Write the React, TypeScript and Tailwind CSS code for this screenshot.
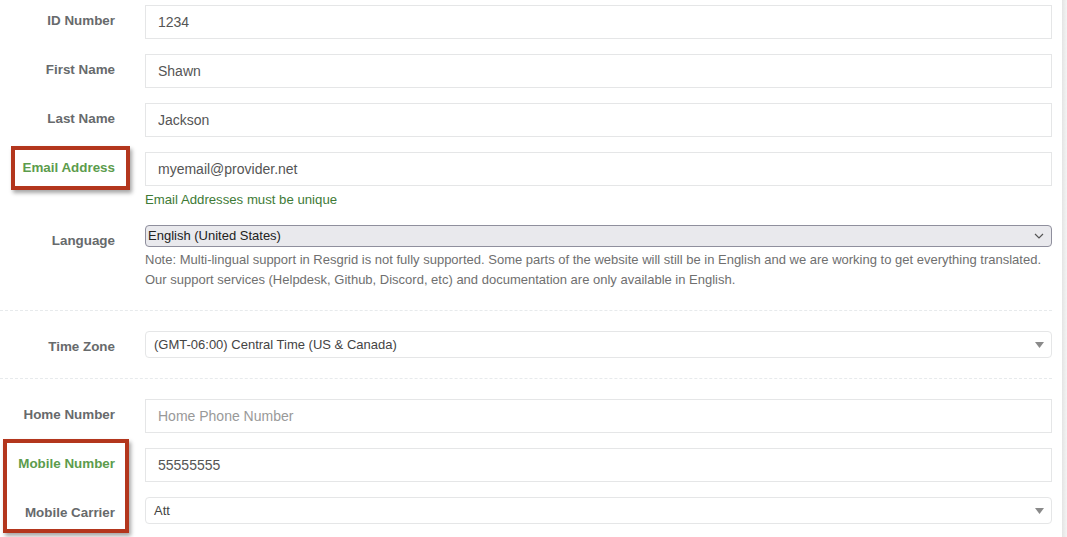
import React from 'react'

const font = { fontFamily: '"Liberation Sans", Arial, sans-serif' }

function Label({ text, green }: { text: string; green?: boolean }) {
  return (
    <div
      className={`w-[115px] shrink-0 pt-[7px] text-right text-[13.4px] font-bold leading-[18px] ${
        green ? 'text-[#5c9c4c]' : 'text-[#676a6c]'
      }`}
    >
      {text}
    </div>
  )
}

function TextInput({ value, placeholder }: { value?: string; placeholder?: string }) {
  return (
    <input
      type="text"
      defaultValue={value}
      placeholder={placeholder}
      className="block h-[34px] w-full border border-[#e5e6e7] bg-white px-[12px] text-[14px] text-[#555] outline-none placeholder:text-[#999]"
      style={font}
    />
  )
}

function ChosenSelect({ value }: { value: string }) {
  return (
    <div className="flex h-[27px] w-full items-center justify-between rounded-[4px] border border-[#e5e6e7] bg-white pl-[8px] pr-[7px] text-[13px] text-[#444]">
      <span>{value}</span>
      <svg width="9" height="6" viewBox="0 0 9 6">
        <path d="M0 0 H9 L4.5 6 Z" fill="#8a8a8a" />
      </svg>
    </div>
  )
}

function Row({
  label,
  green,
  children,
  className = '',
}: {
  label: string
  green?: boolean
  children: React.ReactNode
  className?: string
}) {
  return (
    <div className={`flex ${className}`}>
      <Label text={label} green={green} />
      <div className="ml-[30px] flex-1">{children}</div>
    </div>
  )
}

function Divider() {
  return <div className="my-[20px] border-t border-dashed border-[#e7eaec]" />
}

export default function App() {
  return (
    <div className="relative flex h-[537px] w-[1067px] overflow-hidden bg-white" style={font}>
      <div className="flex-1 pr-[10px] pt-[5px]">
        <Row label="ID Number" className="mb-[15px]">
          <TextInput value="1234" />
        </Row>
        <Row label="First Name" className="mb-[15px]">
          <TextInput value="Shawn" />
        </Row>
        <Row label="Last Name" className="mb-[15px]">
          <TextInput value="Jackson" />
        </Row>
        <Row label="Email Address" green className="mb-[16px]">
          <TextInput value="myemail@provider.net" />
          <div className="mt-[5px] text-[13.2px] leading-[18px] text-[#3e7a36]">Email Addresses must be unique</div>
        </Row>
        <Row label="Language">
          <div className="flex h-[22px] w-full items-center justify-between rounded-[4px] border border-[#8f8f9d] bg-[#e9e9ed] pl-[2px] pr-[7px] text-[13px] text-[#222]">
            <span>English (United States)</span>
            <svg width="10" height="6" viewBox="0 0 10 6">
              <path d="M1 1 L5 5 L9 1" fill="none" stroke="#555" strokeWidth="1.2" />
            </svg>
          </div>
          <div className="mt-[3px] text-[13px] leading-[20px] text-[#6f6f6f]">
            Note: Multi-lingual support in Resgrid is not fully supported. Some parts of the website will still be in
            English and we are working to get everything translated.
            <br />
            Our support services (Helpdesk, Github, Discord, etc) and documentation are only available in English.
          </div>
        </Row>
        <Divider />
        <Row label="Time Zone">
          <ChosenSelect value="(GMT-06:00) Central Time (US & Canada)" />
        </Row>
        <Divider />
        <Row label="Home Number" className="mb-[15px]">
          <TextInput placeholder="Home Phone Number" />
        </Row>
        <Row label="Mobile Number" green className="mb-[15px]">
          <TextInput value="55555555" />
        </Row>
        <Row label="Mobile Carrier">
          <ChosenSelect value="Att" />
        </Row>
      </div>
      <div className="w-[5px] shrink-0 bg-gradient-to-r from-[#e4e4e4] to-[#f4f4f4]" />

      {/* annotation boxes */}
      <div className="pointer-events-none absolute left-[11px] top-[146px] h-[44px] w-[119px] border-4 border-[#b3361d] shadow-[2px_3px_4px_rgba(0,0,0,0.35)]" />
      <div className="pointer-events-none absolute left-[3px] top-[439px] h-[94px] w-[126px] border-4 border-[#b3361d] shadow-[2px_3px_4px_rgba(0,0,0,0.35)]" />
    </div>
  )
}
